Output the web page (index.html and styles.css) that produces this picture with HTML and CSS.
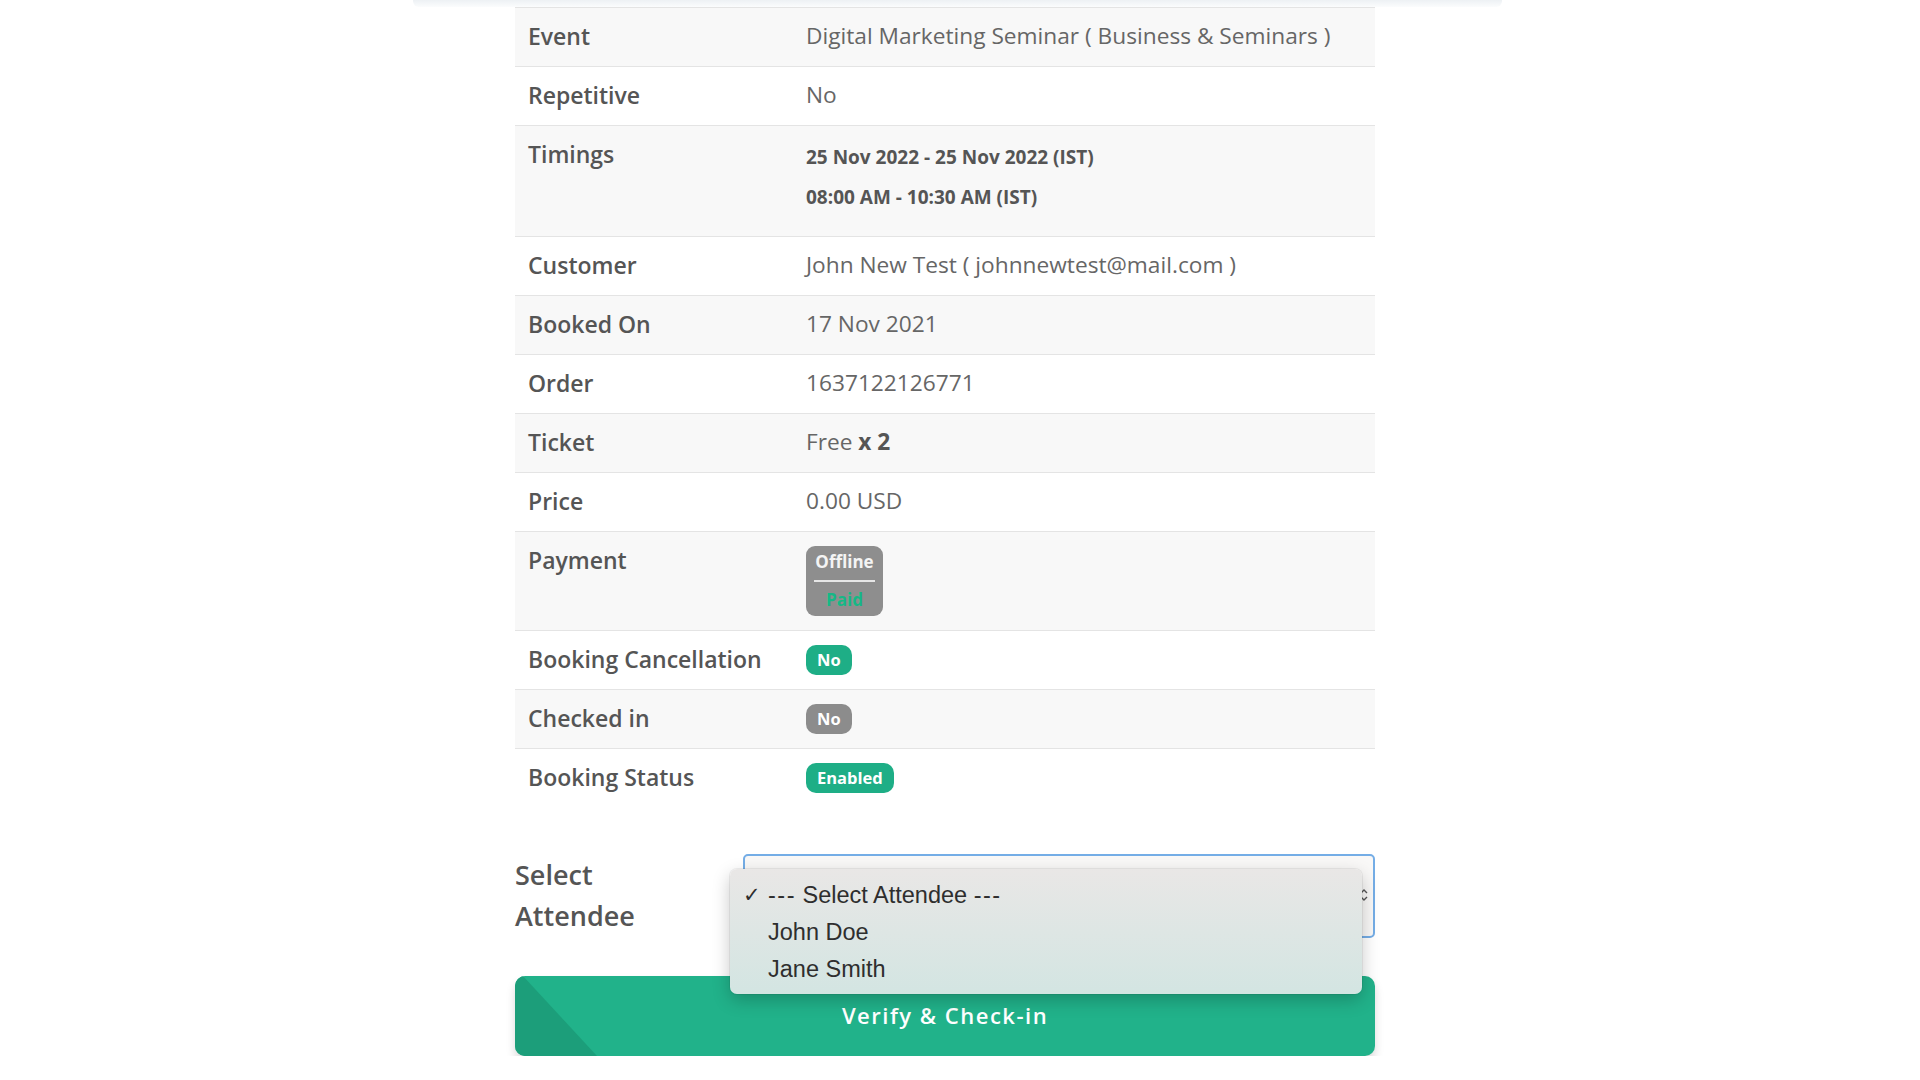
FILE: index.html
```html
<!DOCTYPE html>
<html lang="en">
<head>
    <meta charset="UTF-8">
    <meta name="viewport" content="width=device-width, initial-scale=1.0">
    <title>Booking Details - Check-in</title>
    <link rel="stylesheet" href="styles.css">
</head>
<body>
    <div class="top-shade"></div>

    <div class="booking-container">
        <table class="details">
            <colgroup>
                <col class="col-label">
                <col>
            </colgroup>
            <tbody>
                <tr>
                    <th>Event</th>
                    <td>Digital Marketing Seminar ( Business &amp; Seminars )</td>
                </tr>
                <tr>
                    <th>Repetitive</th>
                    <td>No</td>
                </tr>
                <tr>
                    <th>Timings</th>
                    <td class="timings">
                        <div>25 Nov 2022 - 25 Nov 2022 (IST)</div>
                        <div>08:00 AM - 10:30 AM (IST)</div>
                    </td>
                </tr>
                <tr>
                    <th>Customer</th>
                    <td>John New Test ( johnnewtest@mail.com )</td>
                </tr>
                <tr>
                    <th>Booked On</th>
                    <td>17 Nov 2021</td>
                </tr>
                <tr>
                    <th>Order</th>
                    <td>1637122126771</td>
                </tr>
                <tr>
                    <th>Ticket</th>
                    <td>Free <strong>x 2</strong></td>
                </tr>
                <tr>
                    <th>Price</th>
                    <td>0.00 USD</td>
                </tr>
                <tr>
                    <th>Payment</th>
                    <td class="badge-cell">
                        <div class="payment-badge">
                            <span class="pay-method">Offline</span>
                            <span class="pay-line"></span>
                            <span class="pay-status">Paid</span>
                        </div>
                    </td>
                </tr>
                <tr>
                    <th>Booking Cancellation</th>
                    <td class="badge-cell"><span class="badge green">No</span></td>
                </tr>
                <tr>
                    <th>Checked in</th>
                    <td class="badge-cell"><span class="badge grey">No</span></td>
                </tr>
                <tr>
                    <th>Booking Status</th>
                    <td class="badge-cell"><span class="badge green">Enabled</span></td>
                </tr>
            </tbody>
        </table>

        <div class="attendee-row">
            <label class="attendee-label" for="attendee">Select Attendee</label>
            <div class="select-field" id="attendee">
                <svg class="select-arrow" width="8" height="14" viewBox="0 0 8 14">
                    <path d="M1 5 L4 2 L7 5 M1 9 L4 12 L7 9" fill="none" stroke="#555" stroke-width="1.4"/>
                </svg>
                <ul class="select-menu">
                    <li class="selected"><span class="dashes">---</span> Select Attendee <span class="dashes">---</span></li>
                    <li>John Doe</li>
                    <li>Jane Smith</li>
                </ul>
            </div>
        </div>

        <button type="button" class="checkin-btn">Verify &amp; Check-in</button>
    </div>
</body>
</html>
```

FILE: styles.css
```css
body {
    margin: 0;
    padding: 0;
    background-color: #fff;
    font-family: "Open Sans", "Noto Sans", sans-serif;
    color: #5a5a5a;
}
.top-shade {
    height: 7px;
    width: 1089px;
    margin-left: 413px;
    background: linear-gradient(to bottom, #edf1f4, #fbfcfd);
    border-radius: 0 0 6px 6px;
}
.booking-container {
    width: 860px;
    margin-left: 515px;
}
.details {
    width: 100%;
    border-collapse: collapse;
    table-layout: fixed;
    font-size: 23px;
    line-height: 28px;
}
.col-label {
    width: 291px;
}
.details tr {
    border-top: 1px solid #e4e4e4;
}
.details tr:nth-child(odd) {
    background-color: #f8f8f8;
}
.details th,
.details td {
    padding: 14px 13px 16px 13px;
    text-align: left;
    vertical-align: top;
}
.details th {
    font-weight: 600;
    color: #555;
}
.details td {
    padding-left: 0;
    font-size: 22.7px;
    color: #666;
}
.details td strong {
    color: #555;
}
.details td.timings {
    padding-top: 11px;
    padding-bottom: 19px;
    font-size: 19px;
    font-weight: 700;
    line-height: 40px;
    color: #555;
}
.details td.badge-cell {
    padding-top: 14px;
    padding-bottom: 14px;
}
.badge {
    display: block;
    width: max-content;
    height: 30px;
    line-height: 30px;
    padding: 0 11px;
    border-radius: 10px;
    font-size: 16.5px;
    font-weight: 700;
    color: #fff;
}
.badge.green {
    background-color: #1eae86;
}
.badge.grey {
    background-color: #8c8c8c;
}
.payment-badge {
    display: flex;
    flex-direction: column;
    align-items: center;
    width: 77px;
    height: 70px;
    box-sizing: border-box;
    padding: 6px 8px;
    border-radius: 9px;
    background-color: #8e8e8e;
    font-size: 17px;
    font-weight: 700;
    line-height: 20px;
}
.pay-method {
    color: #f4f4f4;
}
.pay-line {
    align-self: stretch;
    height: 2px;
    margin: 8px 0;
    background-color: #e6e6e6;
}
.pay-status {
    color: #16b886;
}
.attendee-row {
    display: flex;
    margin-top: 47px;
}
.attendee-label {
    width: 228px;
    flex-shrink: 0;
    box-sizing: border-box;
    padding: 0 60px 0 0;
    font-size: 27px;
    font-weight: 600;
    line-height: 41px;
    color: #555;
}
.select-field {
    position: relative;
    flex: 1;
    height: 84px;
    box-sizing: border-box;
    border: 2px solid #74ade6;
    border-radius: 5px;
    background-color: #f9f8f7;
}
.select-arrow {
    position: absolute;
    right: 5px;
    top: 32px;
}
.select-menu {
    position: absolute;
    left: -15px;
    top: 13px;
    width: 632px;
    height: 125px;
    box-sizing: border-box;
    margin: 0;
    padding: 8px 0 0 0;
    list-style: none;
    border-radius: 7px;
    background: linear-gradient(to bottom, #e9e7e6, #d3e5e2);
    box-shadow: 0 6px 18px rgba(0, 0, 0, 0.22), 0 0 0 1px rgba(0, 0, 0, 0.06);
    font-family: "Liberation Sans", Arial, sans-serif;
    font-size: 23.5px;
    line-height: 37px;
    color: #2e2e2e;
    z-index: 2;
}
.select-menu li {
    position: relative;
    padding-left: 38px;
}
.select-menu .dashes {
    letter-spacing: 1.5px;
}
.select-menu li.selected::before {
    content: "\2713";
    position: absolute;
    left: 13px;
    font-family: "DejaVu Sans", sans-serif;
    font-size: 21px;
    font-weight: 700;
}
.checkin-btn {
    position: relative;
    display: block;
    width: 100%;
    height: 80px;
    margin-top: 38px;
    padding-bottom: 4px;
    border: none;
    border-radius: 10px;
    overflow: hidden;
    background-color: #21b28a;
    box-shadow: 0 6px 10px rgba(0, 0, 0, 0.15);
    font-family: "Open Sans", sans-serif;
    font-size: 22px;
    font-weight: 600;
    letter-spacing: 1.5px;
    color: #fff;
    cursor: pointer;
}
.checkin-btn::before {
    content: "";
    position: absolute;
    left: 0;
    top: 0;
    width: 90px;
    height: 100%;
    background-color: #1c9e7a;
    clip-path: polygon(0 0, 8px 0, 82px 100%, 0 100%);
}
```
